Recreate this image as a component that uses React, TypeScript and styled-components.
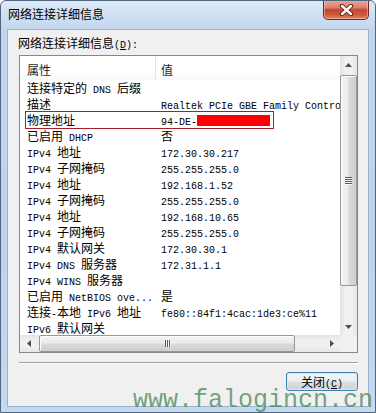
import styled, { createGlobalStyle } from 'styled-components';

const GlobalStyle = createGlobalStyle`
  html, body {
    margin: 0;
    padding: 0;
    background: #ffffff;
  }
  body {
    font-family: "Noto Sans CJK SC", "Liberation Sans", sans-serif;
  }
`;

const WindowFrame = styled.div`
  position: relative;
  width: 376px;
  height: 413px;
  box-sizing: border-box;
  border: 1px solid #4f6580;
  border-radius: 6px 6px 0 0;
  background: linear-gradient(
    to bottom,
    #dde9f7 0%,
    #cddef2 4%,
    #c0d5ee 8%,
    #bed4ed 60%,
    #c4d8ef 100%
  );
  display: flex;
  flex-direction: column;
  overflow: hidden;
`;

const TitleBar = styled.div`
  height: 28px;
  flex: none;
  display: flex;
  align-items: flex-start;
  padding: 0 6px 0 7px;
`;

const Title = styled.div`
  margin-top: 6px;
  font-size: 12px;
  line-height: 14px;
  color: #000;
`;

const CloseButton = styled.div`
  margin-left: auto;
  margin-top: -1px;
  width: 46px;
  height: 20px;
  box-sizing: border-box;
  border: 1px solid #6e2a22;
  border-top: none;
  border-radius: 0 0 5px 5px;
  background: linear-gradient(
    to bottom,
    #e8ab9c 0%,
    #d9806d 40%,
    #c44530 52%,
    #cb5a3c 78%,
    #e08d62 100%
  );
  box-shadow: inset 0 0 0 1px rgba(255, 220, 210, 0.45);
  display: flex;
  align-items: center;
  justify-content: center;
`;

const Client = styled.div`
  flex: 1;
  margin: 0 6px 5px;
  border: 1px solid #9cb3cf;
  background: #f0f0f0;
  display: flex;
  flex-direction: column;
  padding: 6px 10px 0;
`;

const Label = styled.div`
  height: 14px;
  font-size: 12px;
  line-height: 14px;
  color: #000;
  white-space: nowrap;
`;

const Latin = styled.span`
  font-family: "Liberation Mono", monospace;
  font-size: 10px;
  line-height: 10px;
  white-space: pre;
`;

const Key = styled.span`
  text-decoration: underline;
`;

const ListView = styled.div`
  margin: 5px 0 0 1px;
  height: 298px;
  box-sizing: border-box;
  border: 1px solid #828790;
  background: #ffffff;
  display: grid;
  grid-template-columns: 1fr 17px;
  grid-template-rows: 1fr 17px;
`;

const ListContent = styled.div`
  overflow: hidden;
  position: relative;
`;

const HeaderRow = styled.div`
  display: grid;
  grid-template-columns: 136px 1fr;
  height: 24px;
  background: linear-gradient(to bottom, #ffffff 0%, #ffffff 60%, #f7f8fa 100%);
`;

const HeaderCell = styled.div<{ $pad: number; $divider?: boolean }>`
  padding: 3px 0 0 ${(p) => p.$pad}px;
  font-size: 12px;
  line-height: 21px;
  color: #1e1e1e;
  border-right: ${(p) => (p.$divider ? '1px solid #e5e5e5' : 'none')};
`;

const Row = styled.div<{ $marked?: boolean }>`
  position: relative;
  display: grid;
  grid-template-columns: 136px 1fr;
  height: 16px;
  font-size: 12px;
  line-height: 16px;
  color: #000;
  white-space: nowrap;

  &::after {
    content: '';
    display: ${(p) => (p.$marked ? 'block' : 'none')};
    position: absolute;
    left: 5px;
    top: -1px;
    width: 249px;
    height: 18px;
    box-sizing: border-box;
    border: 1px solid #a3202a;
    pointer-events: none;
  }
`;

const Cell = styled.div<{ $pad: number }>`
  overflow: hidden;
  padding-left: ${(p) => p.$pad}px;
`;

const Redaction = styled.span`
  display: inline-block;
  width: 73px;
  height: 11px;
  vertical-align: -1px;
  background: #ff0000;
`;

const VScroll = styled.div`
  grid-row: 1 / 2;
  grid-column: 2 / 3;
  display: flex;
  flex-direction: column;
  background: linear-gradient(to right, #e3e3e3 0%, #f0f0f0 30%, #f0f0f0 70%, #e6e6e6 100%);
`;

const HScroll = styled.div`
  grid-row: 2 / 3;
  grid-column: 1 / 2;
  display: flex;
  background: linear-gradient(to bottom, #e3e3e3 0%, #f0f0f0 30%, #f0f0f0 70%, #e6e6e6 100%);
`;

const Corner = styled.div`
  grid-row: 2 / 3;
  grid-column: 2 / 3;
  background: #f0f0f0;
`;

const ArrowButton = styled.div`
  width: 17px;
  height: 17px;
  flex: none;
  display: flex;
  align-items: center;
  justify-content: center;
`;

const Spacer = styled.div`
  flex: 1;
`;

const VThumb = styled.div`
  margin: 2px 0 0 0;
  height: 211px;
  box-sizing: border-box;
  border: 1px solid #979797;
  border-radius: 2px;
  background: linear-gradient(to right, #f4f4f4 0%, #ebebeb 45%, #dadada 55%, #cecece 100%);
  box-shadow: inset 1px 1px 0 #fcfcfc;
  display: flex;
  flex-direction: column;
  align-items: center;
  justify-content: center;
  gap: 1px;
`;

const HThumb = styled.div`
  margin: 0 0 0 2px;
  width: 256px;
  box-sizing: border-box;
  border: 1px solid #979797;
  border-radius: 2px;
  background: linear-gradient(to bottom, #f4f4f4 0%, #ebebeb 45%, #dadada 55%, #cecece 100%);
  box-shadow: inset 1px 1px 0 #fcfcfc;
  display: flex;
  align-items: center;
  justify-content: center;
  gap: 1px;
`;

const GripLine = styled.div<{ $vertical?: boolean }>`
  width: ${(p) => (p.$vertical ? '1px' : '7px')};
  height: ${(p) => (p.$vertical ? '7px' : '1px')};
  background: #5a5a5a;
  box-shadow: ${(p) => (p.$vertical ? '1px 0 0 #f8f8f8' : '0 1px 0 #f8f8f8')};
`;

const Separator = styled.div`
  margin: 9px 0 0 1px;
  height: 0;
  border-top: 1px solid #a0a0a0;
  border-bottom: 1px solid #ffffff;
`;

const ButtonRow = styled.div`
  display: flex;
  justify-content: flex-end;
  margin-top: 8px;
`;

const DialogButton = styled.div`
  width: 72px;
  height: 19px;
  box-sizing: border-box;
  border: 1px solid #3c7fb1;
  border-radius: 3px;
  background: linear-gradient(to bottom, #f3f5f7 0%, #ebeef0 48%, #dcdfe2 52%, #cfd3d6 100%);
  box-shadow: inset 0 0 0 1px #d6ecf8;
  font-size: 12px;
  line-height: 17px;
  text-align: center;
  color: #000;
`;

const Watermark = styled.div`
  position: absolute;
  left: 132px;
  top: 387px;
  font-family: "Liberation Mono", monospace;
  font-size: 25px;
  line-height: 25px;
  color: rgba(78, 140, 88, 0.78);
  white-space: nowrap;
  pointer-events: none;
`;

const CJK = /([\u3400-\u9fff\uff00-\uffef]+)/;

const MixedText: React.FC<{ text: string }> = ({ text }) => (
  <>
    {text
      .split(CJK)
      .filter(Boolean)
      .map((part, i) =>
        CJK.test(part) ? <span key={i}>{part}</span> : <Latin key={i}>{part}</Latin>
      )}
  </>
);

const Arrow: React.FC<{ dir: 'up' | 'down' | 'left' | 'right' }> = ({ dir }) => {
  const points = {
    up: '0,4 7,4 3.5,0',
    down: '0,0 7,0 3.5,4',
    left: '4,0 4,7 0,3.5',
    right: '0,0 0,7 4,3.5',
  }[dir];
  const vertical = dir === 'up' || dir === 'down';
  return (
    <svg width={vertical ? 7 : 4} height={vertical ? 4 : 7} viewBox={vertical ? '0 0 7 4' : '0 0 4 7'}>
      <polygon points={points} fill="#4d4d4d" />
    </svg>
  );
};

interface Detail {
  name: string;
  value: string;
  marked?: boolean;
}

const details: Detail[] = [
  { name: '连接特定的 DNS 后缀', value: '' },
  { name: '描述', value: 'Realtek PCIe GBE Family Controller' },
  { name: '物理地址', value: '94-DE-', marked: true },
  { name: '已启用 DHCP', value: '否' },
  { name: 'IPv4 地址', value: '172.30.30.217' },
  { name: 'IPv4 子网掩码', value: '255.255.255.0' },
  { name: 'IPv4 地址', value: '192.168.1.52' },
  { name: 'IPv4 子网掩码', value: '255.255.255.0' },
  { name: 'IPv4 地址', value: '192.168.10.65' },
  { name: 'IPv4 子网掩码', value: '255.255.255.0' },
  { name: 'IPv4 默认网关', value: '172.30.30.1' },
  { name: 'IPv4 DNS 服务器', value: '172.31.1.1' },
  { name: 'IPv4 WINS 服务器', value: '' },
  { name: '已启用 NetBIOS ove...', value: '是' },
  { name: '连接-本地 IPv6 地址', value: 'fe80::84f1:4cac:1de3:ce%11' },
  { name: 'IPv6 默认网关', value: '' },
];

const App: React.FC = () => (
  <>
    <GlobalStyle />
    <WindowFrame>
      <TitleBar>
        <Title>网络连接详细信息</Title>
        <CloseButton>
          <svg width="15" height="12" viewBox="0 0 15 12">
            <path d="M3 2 L12 10 M12 2 L3 10" stroke="#5a1a14" strokeWidth="4.2" strokeLinecap="round" />
            <path d="M3 2 L12 10 M12 2 L3 10" stroke="#ffffff" strokeWidth="2.4" strokeLinecap="round" />
          </svg>
        </CloseButton>
      </TitleBar>

      <Client>
        <Label>
          网络连接详细信息
          <Latin>
            (<Key>D</Key>):
          </Latin>
        </Label>

        <ListView>
          <ListContent>
            <HeaderRow>
              <HeaderCell $pad={7} $divider>属性</HeaderCell>
              <HeaderCell $pad={5}>值</HeaderCell>
            </HeaderRow>
            {details.map((d, i) => (
              <Row key={i} $marked={d.marked}>
                <Cell $pad={7}>
                  <MixedText text={d.name} />
                </Cell>
                <Cell $pad={5}>
                  <MixedText text={d.value} />
                  {d.marked && <Redaction />}
                </Cell>
              </Row>
            ))}
          </ListContent>

          <VScroll>
            <ArrowButton>
              <Arrow dir="up" />
            </ArrowButton>
            <VThumb>
              <GripLine />
              <GripLine />
              <GripLine />
              <GripLine />
            </VThumb>
            <Spacer />
            <ArrowButton>
              <Arrow dir="down" />
            </ArrowButton>
          </VScroll>

          <HScroll>
            <ArrowButton>
              <Arrow dir="left" />
            </ArrowButton>
            <HThumb>
              <GripLine $vertical />
              <GripLine $vertical />
              <GripLine $vertical />
            </HThumb>
            <Spacer />
            <ArrowButton>
              <Arrow dir="right" />
            </ArrowButton>
          </HScroll>

          <Corner />
        </ListView>

        <Separator />

        <ButtonRow>
          <DialogButton>
            关闭
            <Latin>
              (<Key>C</Key>)
            </Latin>
          </DialogButton>
        </ButtonRow>
      </Client>

      <Watermark>www.falogincn.cn</Watermark>
    </WindowFrame>
  </>
);

export default App;
